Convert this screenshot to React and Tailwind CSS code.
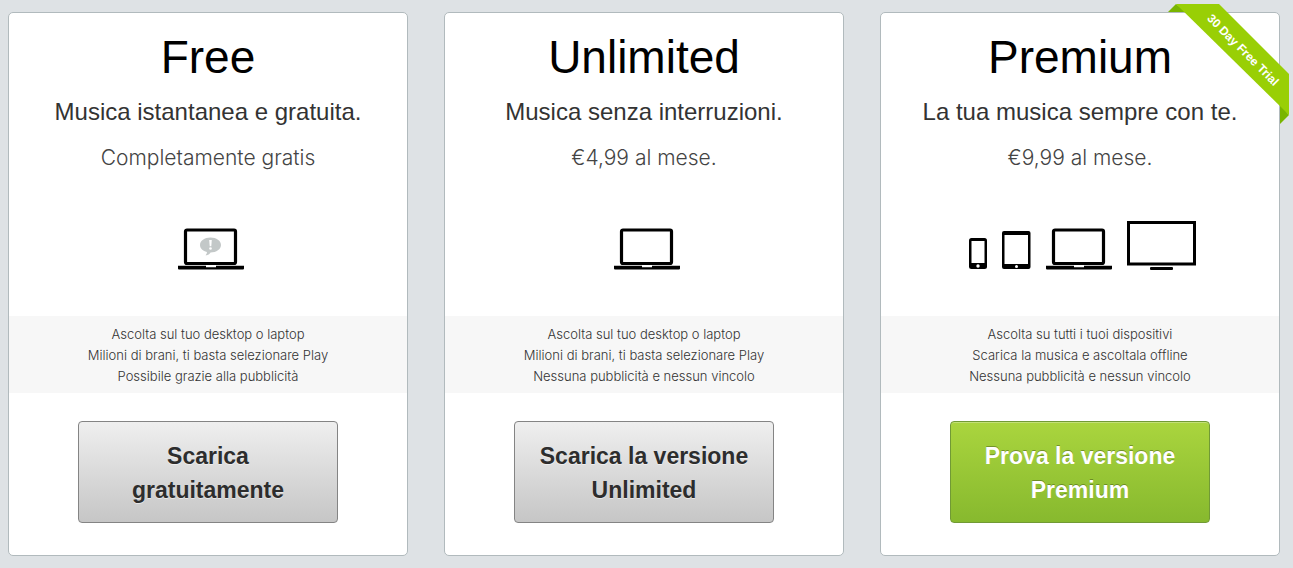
import clsx from 'clsx';

const plans = [
  {
    name: 'Free',
    tagline: 'Musica istantanea e gratuita.',
    price: 'Completamente gratis',
    devices: ['laptopAds'],
    features: [
      'Ascolta sul tuo desktop o laptop',
      'Milioni di brani, ti basta selezionare Play',
      'Possibile grazie alla pubblicità',
    ],
    cta: ['Scarica', 'gratuitamente'],
  },
  {
    name: 'Unlimited',
    tagline: 'Musica senza interruzioni.',
    price: '€4,99 al mese.',
    devices: ['laptop'],
    features: [
      'Ascolta sul tuo desktop o laptop',
      'Milioni di brani, ti basta selezionare Play',
      'Nessuna pubblicità e nessun vincolo',
    ],
    cta: ['Scarica la versione', 'Unlimited'],
  },
  {
    name: 'Premium',
    tagline: 'La tua musica sempre con te.',
    price: '€9,99 al mese.',
    devices: ['phone', 'tablet', 'laptop', 'tv'],
    features: [
      'Ascolta su tutti i tuoi dispositivi',
      'Scarica la musica e ascoltala offline',
      'Nessuna pubblicità e nessun vincolo',
    ],
    cta: ['Prova la versione', 'Premium'],
    ribbon: '30 Day Free Trial',
    highlighted: true,
  },
];

function Laptop({ ads }) {
  return (
    <svg width="66" height="42" viewBox="0 0 66 42" aria-hidden="true">
      <rect x="7.5" y="2" width="50" height="33.5" rx="1.5" fill="#fff" stroke="#000" strokeWidth="3.2" />
      <path d="M0 37.800h28v1.500h10v-1.500H66v2.700q0 1-1 1H1q-1 0-1-1z" fill="#000" />
      {ads ? (
        <g>
          <path
            d="M32.500 9.500c5.900 0 10.500 3.200 10.500 7.500s-4.600 7.500-10.500 7.500c-.6 1.400-2.500 2.700-5 2.800 1-1 1.500-2 1.400-3.300C25 23 22 20.400 22 17c0-4.300 4.600-7.500 10.500-7.500z"
            fill="#c3c8c8"
          />
          <path d="M31.200 12h2.600l-.5 6.300h-1.600z" fill="#fff" />
          <circle cx="32.500" cy="20.500" r="1.300" fill="#fff" />
        </g>
      ) : null}
    </svg>
  );
}

function Phone() {
  return (
    <svg width="18" height="32" viewBox="0 0 18 32" aria-hidden="true">
      <rect width="18" height="31" rx="2.500" fill="#000" />
      <rect x="2.500" y="3" width="13" height="22" fill="#fff" />
      <circle cx="9" cy="28" r="1.700" fill="#fff" />
    </svg>
  );
}

function Tablet() {
  return (
    <svg width="29" height="39" viewBox="0 0 29 39" aria-hidden="true">
      <rect width="28.500" height="38" rx="2" fill="#000" />
      <rect x="2.500" y="4" width="23.500" height="29" fill="#fff" />
      <circle cx="14.500" cy="35.500" r="1.500" fill="#fff" />
    </svg>
  );
}

function Television() {
  return (
    <svg width="69" height="49" viewBox="0 0 69 49" aria-hidden="true">
      <rect x="1.500" y="1.500" width="66" height="41.500" fill="#fff" stroke="#000" strokeWidth="3" />
      <rect x="23" y="46" width="23" height="3" rx="1" fill="#000" />
    </svg>
  );
}

const deviceIcons = {
  laptop: <Laptop />,
  laptopAds: <Laptop ads />,
  phone: <Phone />,
  tablet: <Tablet />,
  tv: <Television />,
};

function Ribbon({ children }) {
  return (
    <svg
      width="121"
      height="120"
      viewBox="0 0 121 120"
      className="absolute -top-[9px] -right-[10px]"
    >
      <path d="M8 0L0 8h18z" fill="#79b500" />
      <path d="M121 111l-9 9v-20z" fill="#79b500" />
      <path d="M8 0h43l70 70v41z" fill="#99cf05" />
      <text
        x="75"
        y="46"
        transform="rotate(45 75 46)"
        textAnchor="middle"
        dominantBaseline="central"
        className="fill-white text-[12px] font-bold"
      >
        {children}
      </text>
    </svg>
  );
}

function PlanCard({ plan }) {
  return (
    <article className="relative flex flex-col items-center rounded-[5px] border border-[#b1babd] bg-white pt-4 pb-8 text-center">
      {plan.ribbon ? <Ribbon>{plan.ribbon}</Ribbon> : null}
      <h2 className="text-[46px] leading-[56px] text-black">{plan.name}</h2>
      <p className="mt-3 text-[24px] leading-[30px] text-[#333]">{plan.tagline}</p>
      <p className="mt-4 font-['Inter'] text-[21px] leading-[30px] font-light text-[#444]">{plan.price}</p>
      <div className="mt-12 flex h-[49px] items-end gap-[15px] pl-[5px]">
        {plan.devices.map((device) => (
          <span key={device}>{deviceIcons[device]}</span>
        ))}
      </div>
      <ul className="mt-[46px] w-full bg-[#f7f7f7] pt-2 pb-[6px] font-['Inter'] text-[13px] leading-[21px] font-light text-[#333]">
        {plan.features.map((feature) => (
          <li key={feature}>{feature}</li>
        ))}
      </ul>
      <button
        type="button"
        className={clsx(
          'mt-7 w-[260px] rounded-[4px] border pt-[17px] pb-[15px] text-[23px] leading-[34px] font-bold',
          plan.highlighted
            ? 'border-[#719a35] bg-linear-to-b from-[#aad53e] to-[#87b92e] text-white inset-shadow-[0_1px_0_#c3e077] text-shadow-[0_-1px_0_#0000004d]'
            : 'border-[#848484] bg-linear-to-b from-[#efefef] to-[#c6c6c6] text-[#2d2d2d] text-shadow-[0_1px_0_#ffffff80]'
        )}
      >
        {plan.cta.map((line) => (
          <span key={line} className="block">{line}</span>
        ))}
      </button>
    </article>
  );
}

function App() {
  return (
    <main className="min-h-screen bg-[#dee2e5] py-3 pr-[13px] pl-2 font-['Liberation_Sans',Arial,sans-serif]">
      <div className="grid grid-cols-3 gap-9">
        {plans.map((plan) => (
          <PlanCard key={plan.name} plan={plan} />
        ))}
      </div>
    </main>
  );
}

export default App;
